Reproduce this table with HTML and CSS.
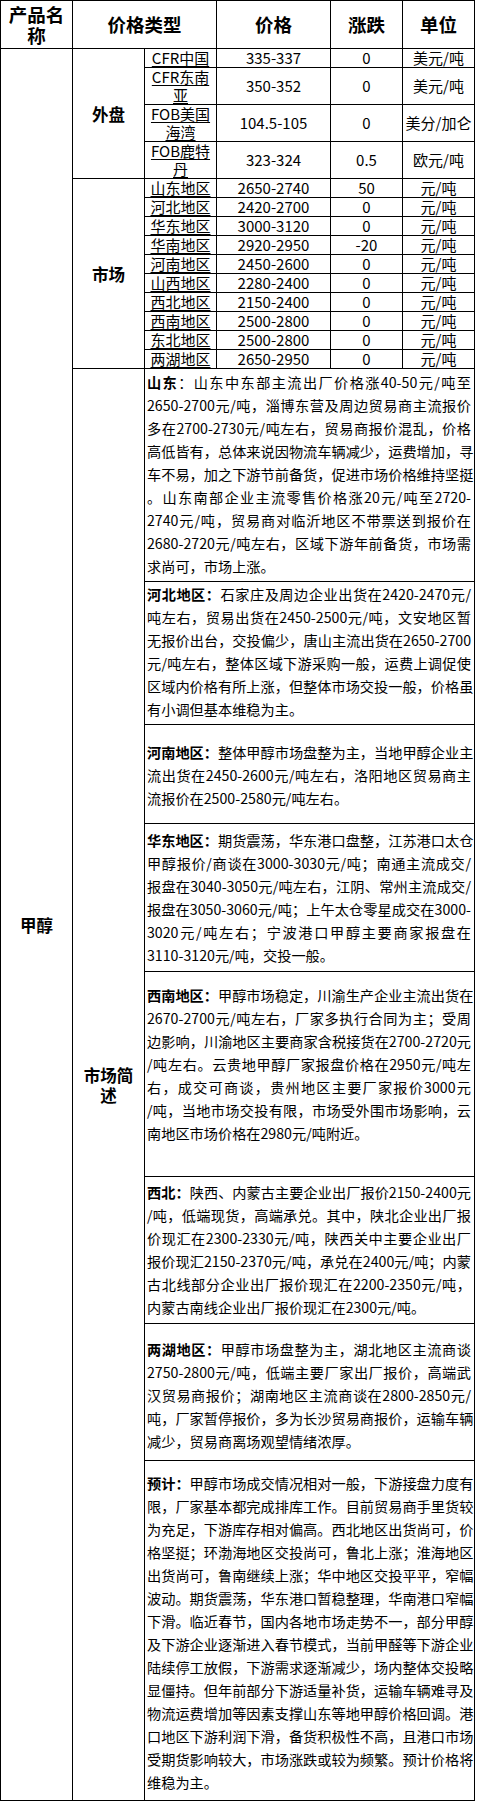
FILE: index.html
```html
<!DOCTYPE html>
<html lang="zh-CN">
<head>
<meta charset="utf-8">
<title>甲醇价格</title>
<link rel="stylesheet" href="styles.css">
</head>
<body>
<table class="price">
  <colgroup>
    <col class="w72"><col class="w72"><col class="w72"><col class="w114"><col class="w72"><col class="w72">
  </colgroup>
  <tr class="head">
    <th>产品名称</th>
    <th colspan="2">价格类型</th>
    <th>价格</th>
    <th>涨跌</th>
    <th>单位</th>
  </tr>
  <tr>
    <td class="prod" rowspan="22">甲醇</td>
    <td class="grp" rowspan="4">外盘</td>
    <td class="name">CFR中国</td><td>335-337</td><td>0</td><td>美元/吨</td>
  </tr>
  <tr><td class="name">CFR东南亚</td><td>350-352</td><td>0</td><td>美元/吨</td></tr>
  <tr><td class="name">FOB美国海湾</td><td>104.5-105</td><td>0</td><td>美分/加仑</td></tr>
  <tr><td class="name">FOB鹿特丹</td><td>323-324</td><td>0.5</td><td>欧元/吨</td></tr>
  <tr>
    <td class="grp" rowspan="10">市场</td>
    <td class="name">山东地区</td><td>2650-2740</td><td>50</td><td>元/吨</td>
  </tr>
  <tr><td class="name">河北地区</td><td>2420-2700</td><td>0</td><td>元/吨</td></tr>
  <tr><td class="name">华东地区</td><td>3000-3120</td><td>0</td><td>元/吨</td></tr>
  <tr><td class="name">华南地区</td><td>2920-2950</td><td>-20</td><td>元/吨</td></tr>
  <tr><td class="name">河南地区</td><td>2450-2600</td><td>0</td><td>元/吨</td></tr>
  <tr><td class="name">山西地区</td><td>2280-2400</td><td>0</td><td>元/吨</td></tr>
  <tr><td class="name">西北地区</td><td>2150-2400</td><td>0</td><td>元/吨</td></tr>
  <tr><td class="name">西南地区</td><td>2500-2800</td><td>0</td><td>元/吨</td></tr>
  <tr><td class="name">东北地区</td><td>2500-2800</td><td>0</td><td>元/吨</td></tr>
  <tr><td class="name">两湖地区</td><td>2650-2950</td><td>0</td><td>元/吨</td></tr>
  <tr>
    <td class="grp" rowspan="8">市场简述</td>
    <td class="desc p-sd" colspan="4">
      <span class="ln"><b>山东</b>：山东中东部主流出厂价格涨40-50元/吨至</span>
      <span class="ln">2650-2700元/吨，淄博东营及周边贸易商主流报价</span>
      <span class="ln">多在2700-2730元/吨左右，贸易商报价混乱，价格</span>
      <span class="ln">高低皆有，总体来说因物流车辆减少，运费增加，寻</span>
      <span class="ln">车不易，加之下游节前备货，促进市场价格维持坚挺</span>
      <span class="ln">。山东南部企业主流零售价格涨20元/吨至2720-</span>
      <span class="ln">2740元/吨，贸易商对临沂地区不带票送到报价在</span>
      <span class="ln">2680-2720元/吨左右，区域下游年前备货，市场需</span>
      <span class="ln last">求尚可，市场上涨。</span>
    </td>
  </tr>
  <tr>
    <td class="desc p-hb" colspan="4">
      <span class="ln"><b>河北地区：</b>石家庄及周边企业出货在2420-2470元/</span>
      <span class="ln">吨左右，贸易出货在2450-2500元/吨，文安地区暂</span>
      <span class="ln">无报价出台，交投偏少，唐山主流出货在2650-2700</span>
      <span class="ln">元/吨左右，整体区域下游采购一般，运费上调促使</span>
      <span class="ln">区域内价格有所上涨，但整体市场交投一般，价格虽</span>
      <span class="ln last">有小调但基本维稳为主。</span>
    </td>
  </tr>
  <tr>
    <td class="desc p-hn" colspan="4">
      <span class="ln"><b>河南地区：</b>整体甲醇市场盘整为主，当地甲醇企业主</span>
      <span class="ln">流出货在2450-2600元/吨左右，洛阳地区贸易商主</span>
      <span class="ln last">流报价在2500-2580元/吨左右。</span>
    </td>
  </tr>
  <tr>
    <td class="desc p-hd" colspan="4">
      <span class="ln"><b>华东地区：</b>期货震荡，华东港口盘整，江苏港口太仓</span>
      <span class="ln">甲醇报价/商谈在3000-3030元/吨；南通主流成交/</span>
      <span class="ln">报盘在3040-3050元/吨左右，江阴、常州主流成交/</span>
      <span class="ln">报盘在3050-3060元/吨；上午太仓零星成交在3000-</span>
      <span class="ln">3020元/吨左右；宁波港口甲醇主要商家报盘在</span>
      <span class="ln last">3110-3120元/吨，交投一般。</span>
    </td>
  </tr>
  <tr>
    <td class="desc p-xn" colspan="4">
      <span class="ln"><b>西南地区：</b>甲醇市场稳定，川渝生产企业主流出货在</span>
      <span class="ln">2670-2700元/吨左右，厂家多执行合同为主；受周</span>
      <span class="ln">边影响，川渝地区主要商家含税接货在2700-2720元</span>
      <span class="ln">/吨左右。云贵地甲醇厂家报盘价格在2950元/吨左</span>
      <span class="ln">右，成交可商谈，贵州地区主要厂家报价3000元</span>
      <span class="ln">/吨，当地市场交投有限，市场受外围市场影响，云</span>
      <span class="ln last">南地区市场价格在2980元/吨附近。</span>
    </td>
  </tr>
  <tr>
    <td class="desc p-xb" colspan="4">
      <span class="ln"><b>西北：</b>陕西、内蒙古主要企业出厂报价2150-2400元</span>
      <span class="ln">/吨，低端现货，高端承兑。其中，陕北企业出厂报</span>
      <span class="ln">价现汇在2300-2330元/吨，陕西关中主要企业出厂</span>
      <span class="ln">报价现汇2150-2370元/吨，承兑在2400元/吨；内蒙</span>
      <span class="ln">古北线部分企业出厂报价现汇在2200-2350元/吨，</span>
      <span class="ln last">内蒙古南线企业出厂报价现汇在2300元/吨。</span>
    </td>
  </tr>
  <tr>
    <td class="desc p-lh" colspan="4">
      <span class="ln"><b>两湖地区：</b>甲醇市场盘整为主，湖北地区主流商谈</span>
      <span class="ln">2750-2800元/吨，低端主要厂家出厂报价，高端武</span>
      <span class="ln">汉贸易商报价；湖南地区主流商谈在2800-2850元/</span>
      <span class="ln">吨，厂家暂停报价，多为长沙贸易商报价，运输车辆</span>
      <span class="ln last">减少，贸易商离场观望情绪浓厚。</span>
    </td>
  </tr>
  <tr>
    <td class="desc p-yj" colspan="4">
      <span class="ln"><b>预计：</b>甲醇市场成交情况相对一般，下游接盘力度有</span>
      <span class="ln">限，厂家基本都完成排库工作。目前贸易商手里货较</span>
      <span class="ln">为充足，下游库存相对偏高。西北地区出货尚可，价</span>
      <span class="ln">格坚挺；环渤海地区交投尚可，鲁北上涨；淮海地区</span>
      <span class="ln">出货尚可，鲁南继续上涨；华中地区交投平平，窄幅</span>
      <span class="ln">波动。期货震荡，华东港口暂稳整理，华南港口窄幅</span>
      <span class="ln">下滑。临近春节，国内各地市场走势不一，部分甲醇</span>
      <span class="ln">及下游企业逐渐进入春节模式，当前甲醛等下游企业</span>
      <span class="ln">陆续停工放假，下游需求逐渐减少，场内整体交投略</span>
      <span class="ln">显僵持。但年前部分下游适量补货，运输车辆难寻及</span>
      <span class="ln">物流运费增加等因素支撑山东等地甲醇价格回调。港</span>
      <span class="ln">口地区下游利润下滑，备货积极性不高，且港口市场</span>
      <span class="ln">受期货影响较大，市场涨跌或较为频繁。预计价格将</span>
      <span class="ln last">维稳为主。</span>
    </td>
  </tr>
</table>
</body>
</html>
```

FILE: styles.css
```css
html, body {
  margin: 0;
  padding: 0;
  background: #ffffff;
}

body {
  font-family: "Noto Sans CJK SC", "Noto Sans", sans-serif;
  color: #000000;
  overflow-x: hidden;
}

.price {
  border-collapse: collapse;
  table-layout: fixed;
  width: 474px;
}

.w72 { width: 72px; }
.w114 { width: 114px; }

.price th,
.price td {
  border: 1px solid #000000;
  padding: 0;
  text-align: center;
  vertical-align: middle;
}

.price td {
  font-size: 15px;
  line-height: 18px;
  height: 18px;
  font-weight: 400;
}

.head th {
  height: 47px;
  font-size: 18.5px;
  line-height: 21px;
  font-weight: 700;
  padding: 0 3px;
}

.price td.prod,
.price td.grp {
  font-size: 16.5px;
  line-height: 20px;
  font-weight: 700;
  padding: 0 4px;
}

.price td.name {
  text-decoration: underline;
  text-underline-offset: 2px;
}

.price td.desc {
  text-align: left;
  vertical-align: top;
  font-size: 14.2px;
  line-height: 23px;
  padding-left: 2px;
  padding-right: 3px;
  height: auto;
  text-autospace: no-autospace;
  text-spacing-trim: space-all;
}

.ln {
  display: block;
  white-space: nowrap;
  text-align: justify;
  text-align-last: justify;
  height: 23px;
}

.ln.last {
  text-align-last: left;
}

.desc b {
  font-weight: 700;
}

.price td.p-sd { padding-top: 2px; padding-bottom: 3px; }
.price td.p-hb { padding-top: 1px; padding-bottom: 3px; }
.price td.p-hn { padding-top: 16px; padding-bottom: 13px; }
.price td.p-hd { padding-top: 5px; padding-bottom: 4px; }
.price td.p-xn { padding-top: 12px; padding-bottom: 31px; }
.price td.p-xb { padding-top: 4px; padding-bottom: 4px; }
.price td.p-lh { padding-top: 14px; padding-bottom: 7px; }
.price td.p-yj { padding-top: 11px; padding-bottom: 6px; }
```
